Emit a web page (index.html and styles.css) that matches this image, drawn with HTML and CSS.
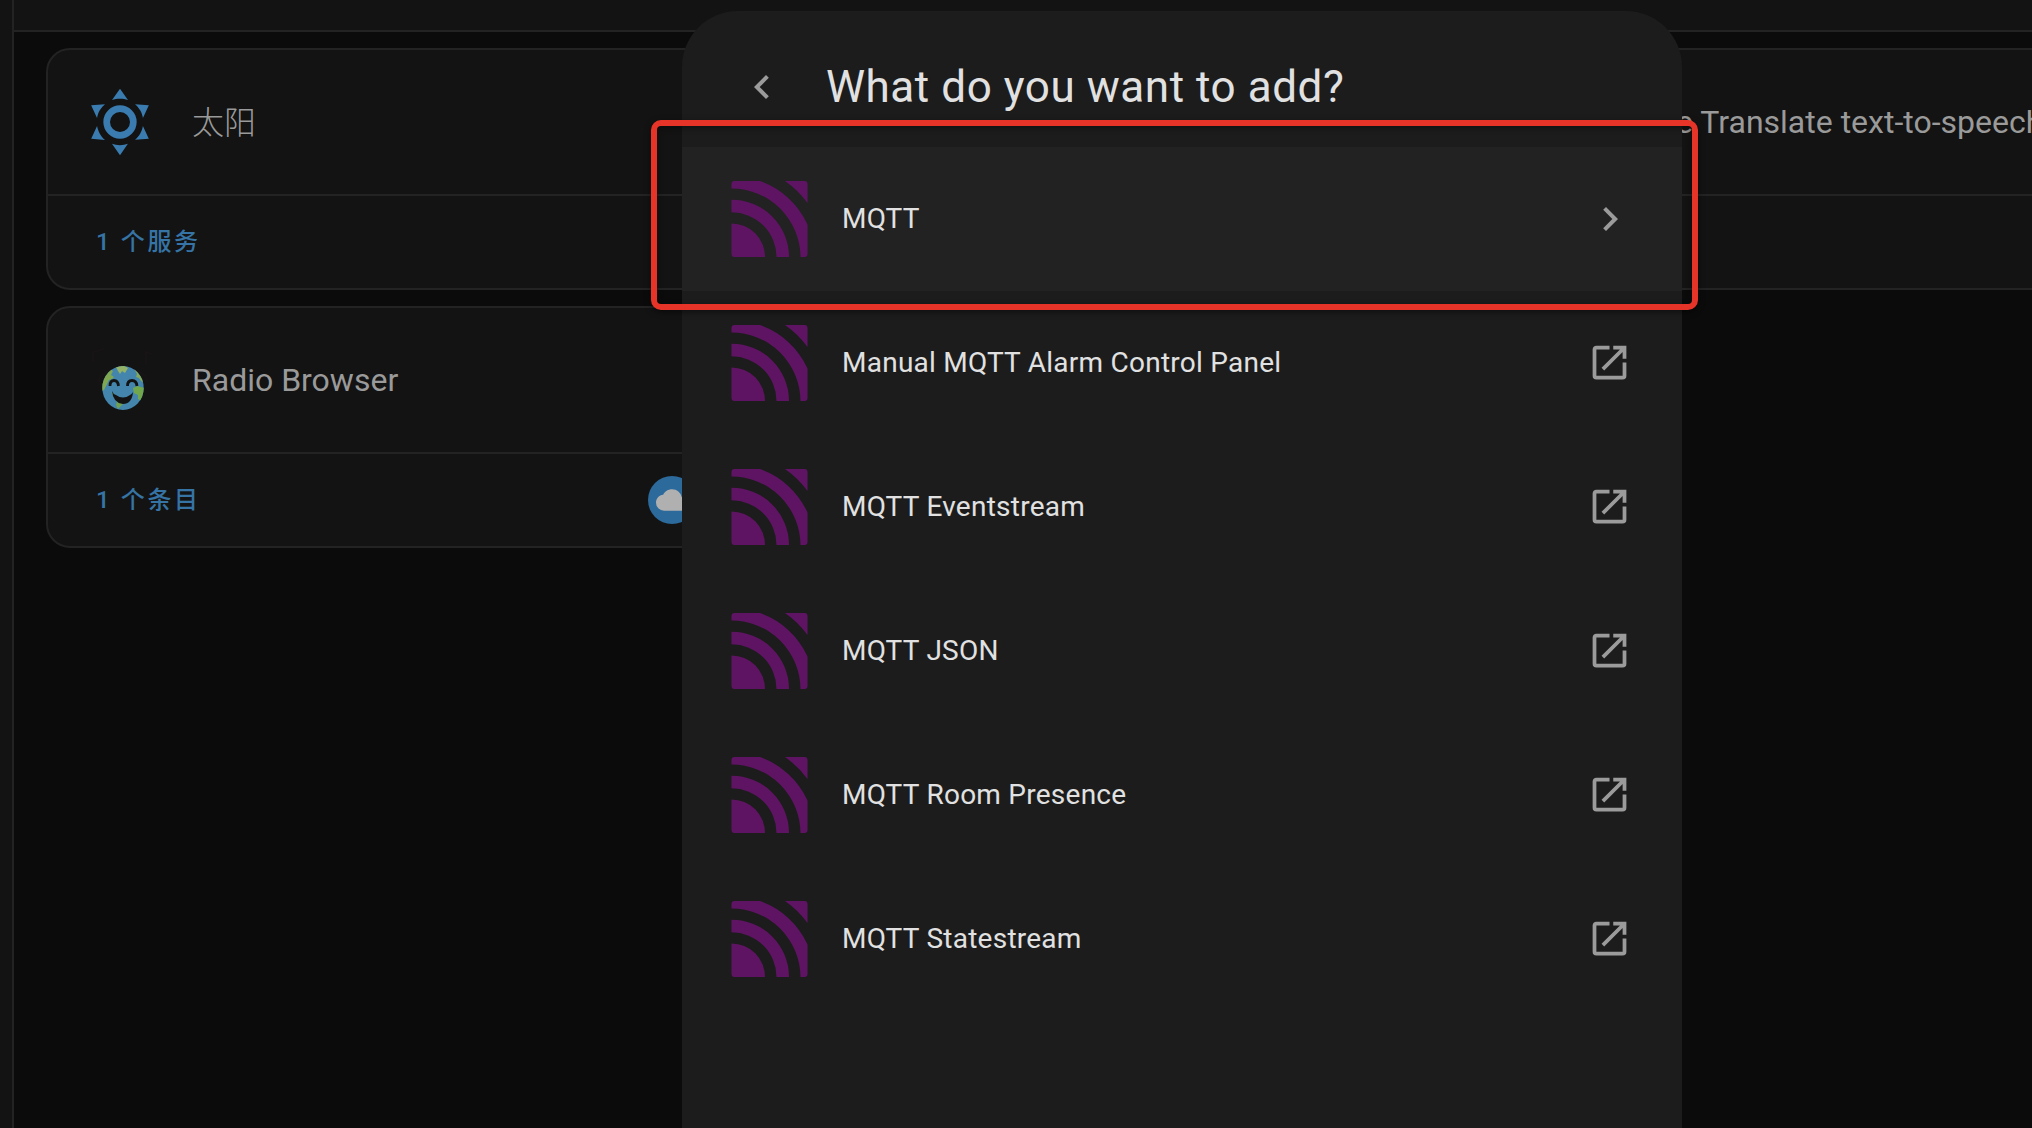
FILE: index.html
```html
<!DOCTYPE html>
<html lang="zh-CN">
<head>
<meta charset="utf-8">
<title>Home Assistant</title>
<link rel="stylesheet" href="styles.css">
</head>
<body>
<svg class="defs" width="0" height="0">
  <symbol id="mqtt" viewBox="0 0 76 76">
    <path d="M0 42.500A33.500 33.500 0 0 1 33.500 76H3A3 3 0 0 1 0 73Z"/>
    <path d="M0 18.700A57.300 57.300 0 0 1 57.500 76H45A45 45 0 0 0 0 31.300Z"/>
    <path d="M0 7.500V3A3 3 0 0 1 3 0H28.500A82 82 0 0 1 76 43.500V73A3 3 0 0 1 73 76H69A69 69 0 0 0 0 7.500Z"/>
    <path d="M53.500 0H73A3 3 0 0 1 76 3V22A94 94 0 0 0 53.500 0Z"/>
  </symbol>
  <symbol id="open" viewBox="0 0 24 24">
    <path d="M14,3V5H17.59L7.76,14.83L9.17,16.24L19,6.41V10H21V3M19,19H5V5H12V3H5C3.89,3 3,3.9 3,5V19A2,2 0 0,0 5,21H19A2,2 0 0,0 21,19V12H19V19Z"/>
  </symbol>
  <symbol id="cog" viewBox="0 0 40 40">
    <path d="M1 11L8 13L13 9L14 1H26L27 9L32 13L39 11V29L32 27L27 31L26 39H14L13 31L8 27L1 29L5 20Z"/>
  </symbol>
</svg>
<div class="app">
  <aside class="sidebar"></aside>
  <div class="main">
    <header class="toolbar"></header>
    <main class="grid">
      <section class="card">
        <div class="card-head">
          <svg class="brand sun" viewBox="0 0 24 24"><path d="M12,7A5,5 0 0,1 17,12A5,5 0 0,1 12,17A5,5 0 0,1 7,12A5,5 0 0,1 12,7M12,9A3,3 0 0,0 9,12A3,3 0 0,0 12,15A3,3 0 0,0 15,12A3,3 0 0,0 12,9M12,2L14.39,5.42C13.65,5.15 12.84,5 12,5C11.16,5 10.35,5.15 9.61,5.42L12,2M3.34,7L7.5,6.65C6.9,7.16 6.36,7.78 5.94,8.5C5.5,9.24 5.25,10 5.11,10.79L3.34,7M3.36,17L5.12,13.23C5.26,14 5.53,14.78 5.95,15.5C6.37,16.24 6.91,16.86 7.5,17.37L3.36,17M20.65,7L18.88,10.79C18.74,10 18.47,9.23 18.05,8.5C17.63,7.78 17.1,7.15 16.5,6.64L20.65,7M20.64,17L16.5,17.36C17.09,16.85 17.62,16.22 18.04,15.5C18.46,14.77 18.73,14 18.87,13.21L20.64,17M12,22L9.59,18.56C10.33,18.83 11.14,19 12,19C12.82,19 13.63,18.83 14.37,18.56L12,22Z"/></svg>
          <h2 class="cjk">太阳</h2>
          <svg class="cog"><use href="#cog"/></svg>
        </div>
        <div class="card-foot"><a>1 个服务</a></div>
      </section>
      <section class="card"><div class="card-head"></div><div class="card-foot"></div></section>
      <section class="card">
        <div class="card-head"><span class="brand"></span><h2>Google Translate text-to-speech</h2></div>
        <div class="card-foot"></div>
      </section>
      <section class="card">
        <div class="card-head">
          <svg class="brand" viewBox="0 0 80 80">
            <clipPath id="globe"><ellipse cx="43" cy="48" rx="20.700" ry="22"/></clipPath>
            <g fill="none" stroke="#181415" stroke-width="2"><path d="M19 42C20 24 66 24 67 42M13 22V12L24 9M66 24V12L72 14"/></g>
            <g clip-path="url(#globe)">
              <rect x="20" y="25" width="46" height="46" fill="#4385ad"/>
              <path d="M20 52V36L29 28L33 31L31 35L34 37L32 39L29 40L26 46L24 50Z" fill="#7fa752"/>
              <path d="M36 27L43 25L48 28L45 33L42 31L40 34L38 31Z" fill="#93b268"/>
              <path d="M54 29L65 35V44L61 41L59 38L56 37L57 34Z" fill="#84a95c"/>
              <path d="M53 48L57 46L65 48V56L61 61L58 59L58 55L54 53Z" fill="#70a74c"/>
              <path d="M31 52L45 62L41 66L38 69L36 65L37 62Z" fill="#70a050"/>
            </g>
            <g fill="none" stroke="#131313" stroke-width="2.800"><path d="M30 46Q30 40.500 34 40.500T38.500 46M47.500 46Q47.500 40.500 52 40.500T57 46"/></g>
            <path d="M32 51Q33 54 36 55Q43 60 50 55Q52 54 53 52Q52 64 43 64Q33 63 32 51Z" fill="#131313"/>
          </svg>
          <h2>Radio Browser</h2>
          <svg class="cog"><use href="#cog"/></svg>
        </div>
        <div class="card-foot">
          <a>1 个条目</a>
          <span class="cloud"><svg viewBox="0 0 24 24"><path d="M19.35,10.03C18.67,6.59 15.64,4 12,4C9.11,4 6.6,5.64 5.35,8.03C2.34,8.36 0,10.9 0,14A6,6 0 0,0 6,20H19A5,5 0 0,0 24,15C24,12.36 21.95,10.22 19.35,10.03Z"/></svg></span>
        </div>
      </section>
    </main>
  </div>
</div>
<div class="dialog" role="dialog">
  <div class="dialog-head">
    <svg class="back" viewBox="0 0 24 24"><path d="M15.41,16.58L10.83,12L15.41,7.41L14,6L8,12L14,18L15.41,16.58Z"/></svg>
    <h1>What do you want to add?</h1>
  </div>
  <ul>
    <li class="active"><svg class="logo"><use href="#mqtt"/></svg><span>MQTT</span><svg class="meta" viewBox="0 0 24 24"><path d="M8.59,16.58L13.17,12L8.59,7.41L10,6L16,12L10,18L8.59,16.58Z"/></svg></li>
    <li><svg class="logo"><use href="#mqtt"/></svg><span>Manual MQTT Alarm Control Panel</span><svg class="meta external"><use href="#open"/></svg></li>
    <li><svg class="logo"><use href="#mqtt"/></svg><span>MQTT Eventstream</span><svg class="meta external"><use href="#open"/></svg></li>
    <li><svg class="logo"><use href="#mqtt"/></svg><span>MQTT JSON</span><svg class="meta external"><use href="#open"/></svg></li>
    <li><svg class="logo"><use href="#mqtt"/></svg><span>MQTT Room Presence</span><svg class="meta external"><use href="#open"/></svg></li>
    <li><svg class="logo"><use href="#mqtt"/></svg><span>MQTT Statestream</span><svg class="meta external"><use href="#open"/></svg></li>
  </ul>
</div>
<div class="highlight"></div>
</body>
</html>
```
FILE: styles.css
```css
* { box-sizing: border-box; }
body {
  margin: 0;
  height: 1128px;
  position: relative;
  overflow: hidden;
  background: #0b0b0b;
  font-family: Roboto, "Noto Sans CJK SC", sans-serif;
}
h1, h2, ul { margin: 0; padding: 0; font-weight: 400; }
svg { display: block; flex: none; }
.defs { position: absolute; }

.app { display: flex; height: 100%; }
.sidebar { width: 14px; flex: none; background: #131313; border-right: 2px solid #232323; }
.main { flex: 1; min-width: 0; overflow: hidden; }
.toolbar { height: 32px; background: #131313; border-bottom: 2px solid #232323; }
.grid {
  display: grid;
  grid-template-columns: repeat(3, 684px);
  gap: 16px;
  padding: 16px 32px;
}
.card { height: 242px; border: 2px solid #232323; border-radius: 24px; background: #131313; }
.card-head { height: 144px; padding: 0 6px 0 32px; display: flex; align-items: center; gap: 32px; }
.card-head h2 { font-size: 32px; line-height: 48px; color: #9a9a9a; white-space: nowrap; }
.card-head .cjk { padding-top: 2px; font-weight: 300; }
.brand { width: 80px; height: 80px; flex: none; }
.sun { fill: #3a7cb0; }
.cog { width: 40px; height: 40px; margin-left: auto; fill: none; stroke: #4a4a4a; stroke-width: 1.5px; }
.card-foot {
  height: 94px;
  padding: 0 32px 0 48px;
  border-top: 2px solid #232323;
  display: flex;
  align-items: center;
  justify-content: space-between;
}
.card-foot a { padding-bottom: 5px; font-size: 24px; font-weight: 500; letter-spacing: 2.6px; color: #3674a5; }
.cloud {
  width: 48px;
  height: 48px;
  border-radius: 50%;
  background: #2c6a9b;
  display: flex;
  align-items: center;
  justify-content: center;
}
.cloud svg { width: 32px; fill: #b0b0b0; }

.dialog {
  position: absolute;
  left: 682px;
  top: 11px;
  width: 1000px;
  height: 1117px;
  border-radius: 56px 56px 0 0;
  background: #1c1c1c;
}
.dialog-head { height: 136px; padding: 16px 56px 0; display: flex; align-items: flex-start; gap: 40px; }
.back { width: 48px; height: 48px; margin-top: 36px; fill: #9b9b9b; }
h1 { font-size: 44px; line-height: 56px; margin-top: 32px; letter-spacing: 0.55px; color: #e1e1e1; }
ul { list-style: none; }
li { height: 144px; padding: 0 48px 0 49px; display: flex; align-items: center; }
li.active { background: #222; }
li span { flex: 1; margin-left: 34px; padding-bottom: 2px; font-size: 28px; letter-spacing: 0.25px; color: #e1e1e1; }
.logo { width: 77px; height: 76px; fill: #5f1463; }
.meta { width: 48px; height: 48px; fill: #9b9b9b; }
.external { width: 45px; height: 45px; margin: 0 2px 1px 0; }
.highlight {
  position: absolute;
  left: 651px;
  top: 120px;
  width: 1047px;
  height: 190px;
  border: 6px solid #e63528;
  border-radius: 10px;
  box-shadow: 0 2px 6px rgba(0, 0, 0, 0.5), inset 0 2px 6px rgba(0, 0, 0, 0.4);
}
```
